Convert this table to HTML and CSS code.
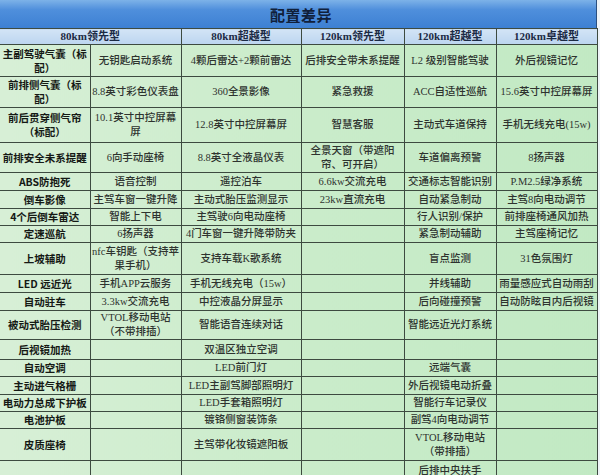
FILE: index.html
```html
<!DOCTYPE html>
<html lang="zh-CN">
<head>
<meta charset="utf-8">
<title>配置差异</title>
<link rel="stylesheet" href="styles.css">
</head>
<body>
<div class="sheet">
  <div class="title">配置差异</div>
  <table class="grid">
    <colgroup>
      <col class="c1"><col class="c2"><col class="c3"><col class="c4"><col class="c5"><col class="c6">
    </colgroup>
    <thead>
      <tr class="head">
        <th colspan="2">80km领先型</th>
        <th>80km超越型</th>
        <th>120km领先型</th>
        <th>120km超越型</th>
        <th>120km卓越型</th>
      </tr>
    </thead>
    <tbody>
      <tr class="r32"><td class="k">主副驾驶气囊（标<br>配）</td><td>无钥匙启动系统</td><td>4颗后雷达+2颗前雷达</td><td>后排安全带未系提醒</td><td>L2 级别智能驾驶</td><td>外后视镜记忆</td></tr>
      <tr class="r31"><td class="k">前排侧气囊（标<br>配）</td><td>8.8英寸彩色仪表盘</td><td>360全景影像</td><td>紧急救援</td><td>ACC自适性巡航</td><td>15.6英寸中控屏幕屏</td></tr>
      <tr class="r35"><td class="k">前后贯穿侧气帘<br>（标配）</td><td>10.1英寸中控屏幕<br>屏</td><td>12.8英寸中控屏幕屏</td><td>智慧客服</td><td>主动式车道保持</td><td>手机无线充电(15w)</td></tr>
      <tr class="r30"><td class="k">前排安全未系提醒</td><td>6向手动座椅</td><td>8.8英寸全液晶仪表</td><td>全景天窗（带遮阳<br>帘、可开启）</td><td>车道偏离预警</td><td>8扬声器</td></tr>
      <tr class="r18"><td class="k">ABS防抱死</td><td>语音控制</td><td>遥控泊车</td><td>6.6kw交流充电</td><td>交通标志智能识别</td><td>P.M2.5绿净系统</td></tr>
      <tr class="r18"><td class="k">倒车影像</td><td>主驾车窗一键升降</td><td>主动式胎压监测显示</td><td>23kw直流充电</td><td>自动紧急制动</td><td>主驾8向电动调节</td></tr>
      <tr class="r17"><td class="k">4个后倒车雷达</td><td>智能上下电</td><td>主驾驶6向电动座椅</td><td></td><td>行人识别/保护</td><td>前排座椅通风加热</td></tr>
      <tr class="r17"><td class="k">定速巡航</td><td>6扬声器</td><td>4门车窗一键升降带防夹</td><td></td><td>紧急制动辅助</td><td>主驾座椅记忆</td></tr>
      <tr class="r32"><td class="k">上坡辅助</td><td>nfc车钥匙（支持苹<br>果手机）</td><td>支持车载K歌系统</td><td></td><td>盲点监测</td><td>31色氛围灯</td></tr>
      <tr class="r18"><td class="k">LED 远近光</td><td>手机APP云服务</td><td>手机无线充电（15w）</td><td></td><td>并线辅助</td><td>雨量感应式自动雨刮</td></tr>
      <tr class="r18"><td class="k">自动驻车</td><td>3.3kw交流充电</td><td>中控液晶分屏显示</td><td></td><td>后向碰撞预警</td><td>自动防眩目内后视镜</td></tr>
      <tr class="r27"><td class="k">被动式胎压检测</td><td>VTOL移动电站<br>（不带排插）</td><td>智能语音连续对话</td><td></td><td>智能远近光灯系统</td><td></td></tr>
      <tr class="r20"><td class="k">后视镜加热</td><td></td><td>双温区独立空调</td><td></td><td></td><td></td></tr>
      <tr class="r17"><td class="k">自动空调</td><td></td><td>LED前门灯</td><td></td><td>远端气囊</td><td></td></tr>
      <tr class="r18"><td class="k">主动进气格栅</td><td></td><td>LED主副驾脚部照明灯</td><td></td><td>外后视镜电动折叠</td><td></td></tr>
      <tr class="r17"><td class="k">电动力总成下护板</td><td></td><td>LED手套箱照明灯</td><td></td><td>智能行车记录仪</td><td></td></tr>
      <tr class="r17"><td class="k">电池护板</td><td></td><td>镀铬侧窗装饰条</td><td></td><td>副驾4向电动调节</td><td></td></tr>
      <tr class="r32"><td class="k">皮质座椅</td><td></td><td>主驾带化妆镜遮阳板</td><td></td><td>VTOL移动电站<br>（带排插）</td><td></td></tr>
      <tr class="r20"><td class="k"></td><td></td><td></td><td></td><td>后排中央扶手</td><td></td></tr>
    </tbody>
  </table>
</div>
</body>
</html>
```

FILE: styles.css
```css
html, body {
  margin: 0;
  padding: 0;
  background: #eef3f7;
  overflow: hidden;
}

.sheet {
  width: 597px;
  font-family: "Liberation Serif", "Noto Sans CJK SC", serif;
}

.title {
  height: 28px;
  box-sizing: border-box;
  display: flex;
  align-items: center;
  justify-content: center;
  background: linear-gradient(180deg, #7db2e8 0%, #4f8fdc 35%, #3d80d3 100%);
  border-right: 1px solid #2a4f80;
  color: #10203a;
  font-family: "Noto Sans CJK SC", sans-serif;
  font-size: 15px;
  font-weight: 700;
  letter-spacing: 0.5px;
  padding-left: 6px;
}

.grid {
  width: 597px;
  table-layout: fixed;
  border-collapse: collapse;
  background: linear-gradient(90deg, #d7efd6 0%, #cbeccb 45%, #c1e9c3 100%);
}

.c1 { width: 90px; }
.c2 { width: 91px; }
.c3 { width: 120px; }
.c4 { width: 103px; }
.c5 { width: 92px; }
.c6 { width: 101px; }

.grid th,
.grid td {
  border: 1.4px solid #3d4a40;
  padding: 0 1px;
  text-align: center;
  vertical-align: middle;
  font-size: 10.5px;
  line-height: 14px;
  color: #2e332f;
  white-space: nowrap;
  overflow: hidden;
}

.grid tr > :first-child {
  border-left: none;
}

.head th {
  height: 15px;
  padding: 0;
  background: linear-gradient(180deg, #d2e4f6, #bcd5ef);
  color: #1b2a44;
  font-weight: 700;
  font-size: 11px;
  line-height: 15px;
}

.grid td {
  font-weight: 500;
}

.grid td.k {
  color: #151915;
  font-weight: 700;
  font-family: "Noto Sans CJK SC", sans-serif;
}

.r17 { height: 17px; }
.r18 { height: 18px; }
.r20 { height: 20px; }
.r27 { height: 27px; }
.r30 { height: 30px; }
.r31 { height: 31px; }
.r32 { height: 32px; }
.r35 { height: 35px; }
```
